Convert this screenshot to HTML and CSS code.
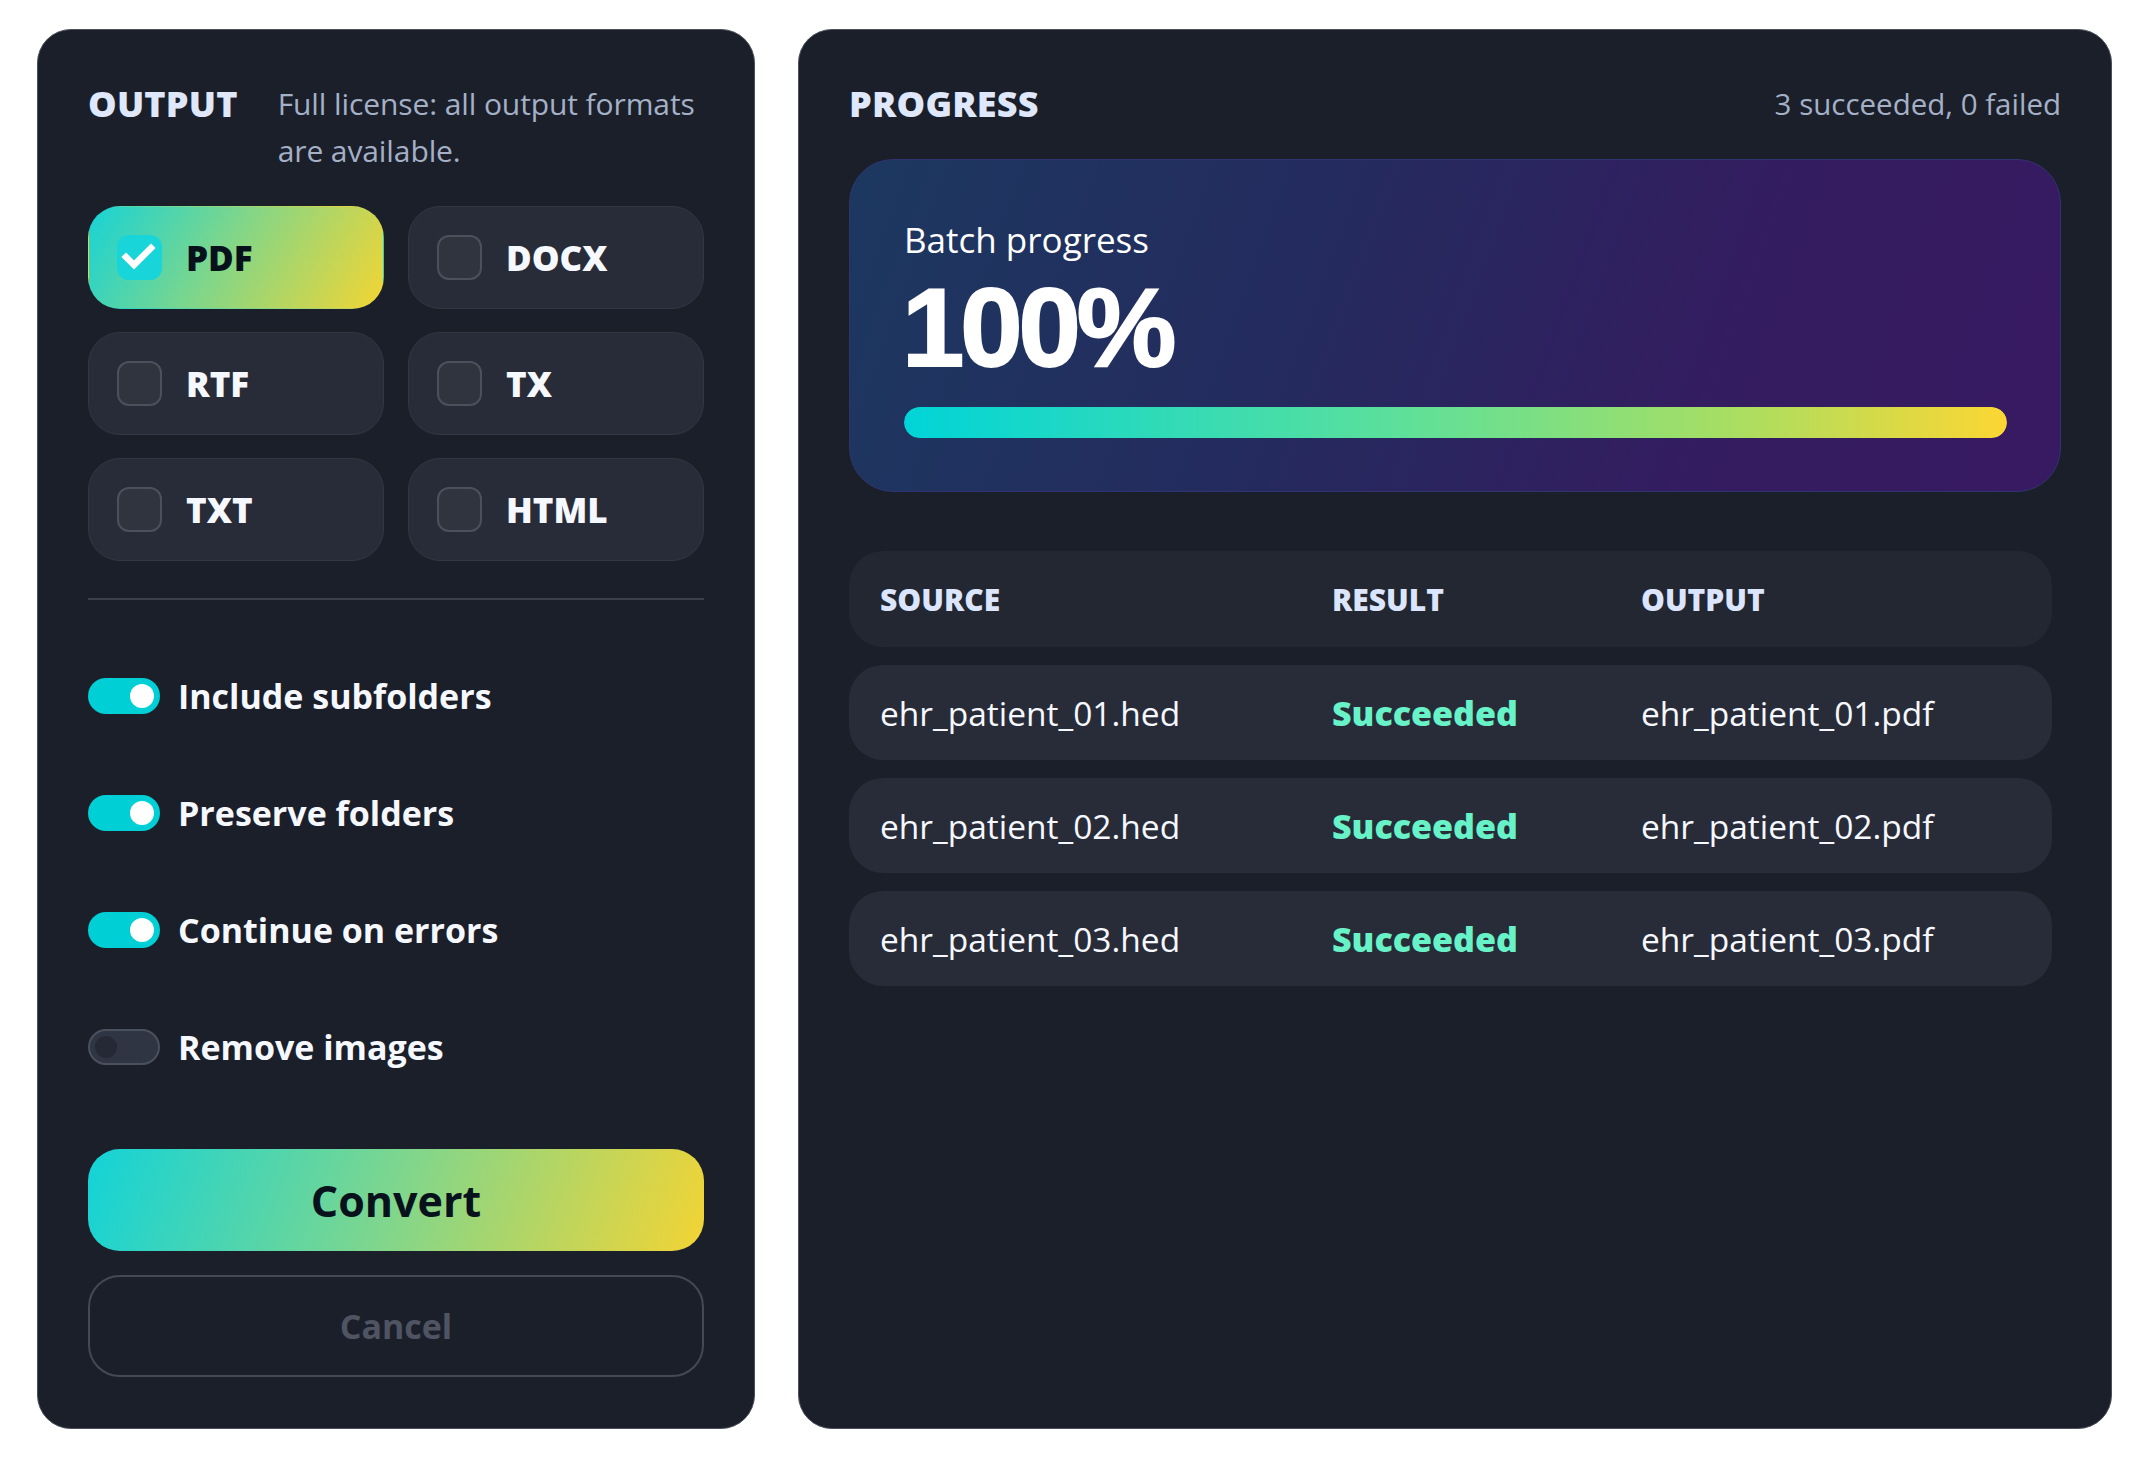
FILE: index.html
```html
<!DOCTYPE html>
<html>
<head>
  <link rel="stylesheet" href="styles.css">
</head>
<body>
  <div class="app">
    <section class="panel options">
      <header class="panel-head">
        <h2 class="panel-title">OUTPUT</h2>
        <p class="note">Full license: all output formats are available.</p>
      </header>

      <div class="formats">
        <div class="format selected">
          <span class="check">
            <svg viewBox="0 0 45 45"><polyline points="9,22 17,30 34,13"/></svg>
          </span>
          PDF
        </div>
        <div class="format"><span class="check"></span>DOCX</div>
        <div class="format"><span class="check"></span>RTF</div>
        <div class="format"><span class="check"></span>TX</div>
        <div class="format"><span class="check"></span>TXT</div>
        <div class="format"><span class="check"></span>HTML</div>
      </div>

      <div class="divider"></div>

      <div class="toggles">
        <div class="toggle-row"><span class="switch on"></span>Include subfolders</div>
        <div class="toggle-row"><span class="switch on"></span>Preserve folders</div>
        <div class="toggle-row"><span class="switch on"></span>Continue on errors</div>
        <div class="toggle-row"><span class="switch"></span>Remove images</div>
      </div>

      <div class="actions">
        <button class="btn convert">Convert</button>
        <button class="btn cancel" disabled>Cancel</button>
      </div>
    </section>

    <section class="panel progress">
      <header class="panel-head spread">
        <h2 class="panel-title">PROGRESS</h2>
        <span class="summary">3 succeeded, 0 failed</span>
      </header>

      <div class="batch">
        <div class="batch-label">Batch progress</div>
        <div class="batch-value">100%</div>
        <div class="bar"><div class="bar-fill" style="width: 100%"></div></div>
      </div>

      <div class="results">
        <div class="result-row head">
          <span>SOURCE</span>
          <span>RESULT</span>
          <span>OUTPUT</span>
        </div>
        <div class="result-row">
          <span>ehr_patient_01.hed</span>
          <span class="status ok">Succeeded</span>
          <span>ehr_patient_01.pdf</span>
        </div>
        <div class="result-row">
          <span>ehr_patient_02.hed</span>
          <span class="status ok">Succeeded</span>
          <span>ehr_patient_02.pdf</span>
        </div>
        <div class="result-row">
          <span>ehr_patient_03.hed</span>
          <span class="status ok">Succeeded</span>
          <span>ehr_patient_03.pdf</span>
        </div>
      </div>
    </section>
  </div>
</body>
</html>
```

FILE: styles.css
```css
body {
  margin: 0;
  background: #fff;
  font-family: "Open Sans", "Noto Sans", sans-serif;
  color: #f4f7ff;
}

.app {
  display: flex;
  gap: 43px;
  padding: 29px 0 0 37px;
}

.panel {
  box-sizing: border-box;
  height: 1400px;
  background: #1b1f2a;
  border: 1px solid #4b505c;
  border-radius: 34px;
  display: flex;
  flex-direction: column;
}

.options {
  width: 718px;
  padding: 50px 50px 51px 50px;
}

.progress {
  width: 1314px;
  padding: 50px 50px 50px 50px;
}

.panel-head {
  display: flex;
  align-items: flex-start;
  gap: 40px;
}

.panel-head.spread {
  justify-content: space-between;
}

.panel-title {
  margin: 0;
  font-size: 36px;
  line-height: 47px;
  font-weight: 800;
  letter-spacing: 0.2px;
  color: #dfe7fb;
}

.note {
  margin: 0;
  font-size: 30px;
  line-height: 47px;
  letter-spacing: -0.1px;
  color: #a4b0c6;
}

.summary {
  font-size: 29.5px;
  line-height: 47px;
  color: #a4b0c6;
}

/* format picker */
.formats {
  margin-top: 32px;
  display: grid;
  grid-template-columns: 1fr 1fr;
  grid-auto-rows: 103px;
  gap: 23px 24px;
}

.format {
  display: flex;
  align-items: center;
  gap: 24px;
  padding: 0 28px;
  background: #282c38;
  border: 1.5px solid #323744;
  border-radius: 32px;
  font-size: 35px;
  font-weight: 800;
  color: #f6f8ff;
}

.format.selected {
  background: linear-gradient(120deg, #17d3d6 0%, #7fd68a 45%, #f3d533 100%);
  border-color: transparent;
  color: #07111c;
}

.check {
  box-sizing: border-box;
  width: 45px;
  height: 45px;
  flex: none;
  border-radius: 12px;
  background: #30343f;
  border: 2px solid #4b505c;
}

.selected .check {
  background: #17d5d8;
  border: none;
}

.check svg {
  display: block;
  width: 45px;
  height: 45px;
}

.check polyline {
  fill: none;
  stroke: #fff;
  stroke-width: 6.5;
  stroke-linecap: square;
}

.divider {
  margin-top: 37px;
  height: 2px;
  background: #3a3f4b;
}

/* switches */
.toggles {
  margin-top: 72px;
  display: flex;
  flex-direction: column;
  gap: 69px;
}

.toggle-row {
  display: flex;
  align-items: center;
  gap: 18px;
  height: 48px;
  font-size: 34px;
  font-weight: 700;
  color: #f6f8ff;
}

.switch {
  box-sizing: border-box;
  position: relative;
  width: 72px;
  height: 36px;
  flex: none;
  border-radius: 18px;
  background: #303543;
  border: 2px solid #4b505d;
}

.switch::after {
  content: "";
  position: absolute;
  left: 5px;
  top: 5px;
  width: 22px;
  height: 22px;
  border-radius: 50%;
  background: #252935;
}

.switch.on {
  background: #00d0d6;
  border: none;
}

.switch.on::after {
  left: auto;
  right: 6px;
  top: 6px;
  width: 24px;
  height: 24px;
  background: #fff;
}

/* buttons */
.actions {
  margin-top: auto;
  display: flex;
  flex-direction: column;
  gap: 24px;
}

.btn {
  height: 102px;
  border-radius: 32px;
  font-family: inherit;
  font-weight: 700;
  cursor: pointer;
}

.convert {
  border: none;
  background: linear-gradient(110deg, #12d3d8 0%, #80d68c 50%, #f3d434 100%);
  color: #08121c;
  font-size: 43px;
}

.cancel {
  background: transparent;
  border: 2px solid #444957;
  color: #4f5462;
  font-size: 34px;
  cursor: default;
}

/* batch card */
.batch {
  margin-top: 32px;
  padding: 56px 53px 53px 54px;
  border-radius: 44px;
  border: 1px solid #2f3470;
  background: linear-gradient(110deg, #1c3860 0%, #252a5e 40%, #341c60 72%, #381a62 100%);
}

.batch-label {
  font-size: 35px;
  line-height: 48px;
  color: #fff;
}

.batch-value {
  margin: 8px 0 0 -2px;
  font-family: "Liberation Sans", Arial, sans-serif;
  font-size: 112px;
  line-height: 112px;
  font-weight: 700;
  letter-spacing: -4px;
  -webkit-text-stroke: 2px #fff;
  color: #fff;
}

.bar {
  margin-top: 23px;
  height: 31px;
  border-radius: 16px;
  overflow: hidden;
}

.bar-fill {
  height: 100%;
  border-radius: 16px;
  background: linear-gradient(90deg, #00d4d8 0%, #5de09a 45%, #a8de62 75%, #fcd633 100%);
}

/* result table */
.results {
  margin-top: 59px;
  margin-right: 9px;
  display: flex;
  flex-direction: column;
  gap: 18px;
}

.result-row {
  display: grid;
  grid-template-columns: 452px 309px 1fr;
  align-items: center;
  height: 95px;
  padding: 0 31px;
  box-sizing: border-box;
  border-radius: 34px;
  background: #282c38;
  font-size: 33.5px;
  color: #f6f8ff;
}

.result-row.head {
  height: 96px;
  background: #222732;
  font-size: 30px;
  font-weight: 800;
  color: #dbe5fd;
}

.status.ok {
  font-size: 34px;
  font-weight: 800;
  color: #68f2c8;
}
```
